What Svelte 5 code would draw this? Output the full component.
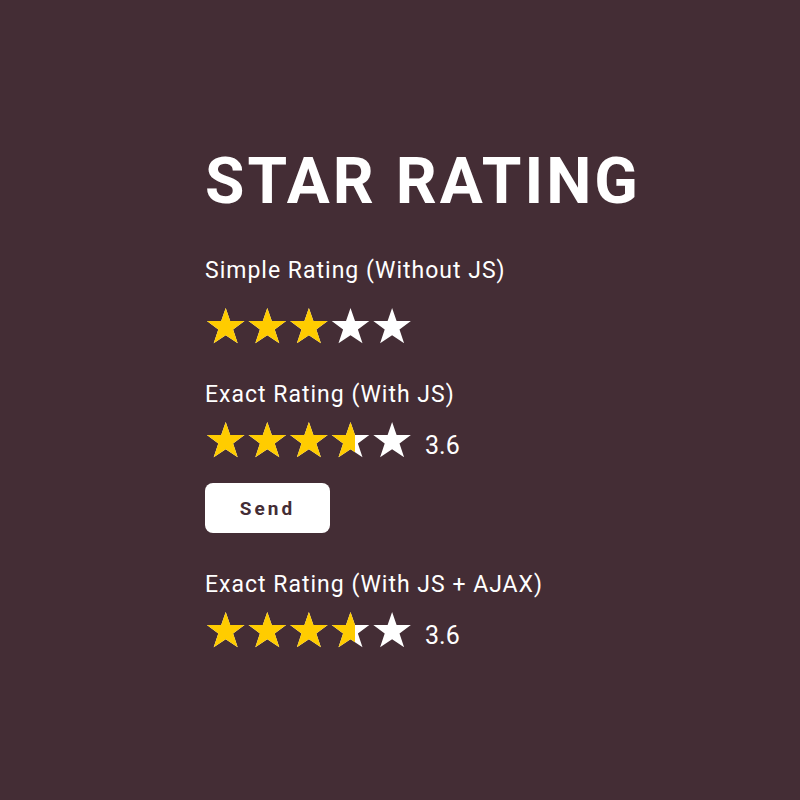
<script>
  const steps = [1, 2, 3, 4, 5];
  let simple = $state(3);
  let exact = $state(3.6);
  let live = $state(3.6);

  // one star, centred on x = 0 with its tip at y = 0
  const star =
    '0,0 4.5,12.9 18.8,12.9 7.4,21.5 12,35.2 0,27.3 -12,35.2 -7.4,21.5 -18.8,12.9 -4.5,12.9';
</script>

{#snippet stars()}
  <svg viewBox="0 0 208 36" aria-hidden="true">
    {#each steps as n}
      <polygon points={star} transform="translate({20.7 + (n - 1) * 41.6} 0)" />
    {/each}
  </svg>
{/snippet}

{#snippet meter(value)}
  <div class="base">{@render stars()}</div>
  <div class="fill" style="width: {value * 20}%">{@render stars()}</div>
{/snippet}

<main>
  <div class="content">
    <h1>STAR RATING</h1>

    <fieldset>
      <legend>Simple Rating (Without JS)</legend>
      <div class="stars simple">
        {@render meter(simple)}
        <div class="choices">
          {#each steps as n}
            <label>
              <input type="radio" name="simple" value={n} bind:group={simple} aria-label="{n} stars" />
            </label>
          {/each}
        </div>
      </div>
    </fieldset>

    <form onsubmit={(e) => e.preventDefault()}>
      <label class="caption" for="exact">Exact Rating (With JS)</label>
      <div class="row">
        <div class="stars">
          {@render meter(exact)}
          <input id="exact" type="range" min="0" max="5" step="0.1" bind:value={exact} />
        </div>
        <output for="exact">{exact.toFixed(1)}</output>
      </div>
      <button type="submit">Send</button>
    </form>

    <section>
      <label class="caption" for="live">Exact Rating (With JS + AJAX)</label>
      <div class="row">
        <div class="stars">
          {@render meter(live)}
          <input id="live" type="range" min="0" max="5" step="0.1" bind:value={live} />
        </div>
        <output for="live">{live.toFixed(1)}</output>
      </div>
    </section>
  </div>
</main>

<style>
  :global(body) {
    background: #442d35;
  }

  main {
    box-sizing: border-box;
    min-height: 100vh;
    padding-bottom: 8px;
    display: flex;
    flex-direction: column;
    align-items: center;
    justify-content: center;
    color: #fff;
    font-family: Roboto, sans-serif;
    font-size: 23px;
    line-height: 30px;
  }

  .content {
    width: 390px;
    max-width: 100%;
  }

  h1 {
    margin: 0 0 36px;
    font-size: 64px;
    font-weight: 700;
    line-height: 76px;
    letter-spacing: 3px;
    white-space: nowrap;
  }

  fieldset {
    margin: 0 0 36px;
    padding: 0;
    border: 0;
  }

  legend,
  .caption {
    display: block;
    padding: 0;
    letter-spacing: 1px;
  }

  .stars {
    position: relative;
    width: 208px;
    height: 36px;
  }

  .simple {
    margin-top: 22px;
  }

  .base,
  .fill {
    position: absolute;
    top: 0;
    left: 0;
    overflow: hidden;
  }

  .base {
    fill: #fff;
  }

  .fill {
    fill: #fc0;
  }

  svg {
    display: block;
    width: 208px;
    height: 36px;
  }

  .choices {
    position: absolute;
    inset: 0;
    display: flex;
  }

  .choices label {
    flex: 1;
  }

  input {
    width: 100%;
    height: 100%;
    margin: 0;
    opacity: 0;
    cursor: pointer;
  }

  input[type='range'] {
    position: absolute;
    inset: 0;
  }

  .row {
    display: flex;
    align-items: flex-end;
    gap: 12px;
    margin-top: 12px;
  }

  output {
    font-size: 25px;
    line-height: 24px;
  }

  button {
    display: block;
    margin: 25px 0 37px;
    width: 125px;
    height: 50px;
    padding: 0;
    border: 0;
    border-radius: 8px;
    background: #fff;
    color: #442d35;
    font: 700 19px Roboto, sans-serif;
    letter-spacing: 3px;
    cursor: pointer;
  }
</style>
